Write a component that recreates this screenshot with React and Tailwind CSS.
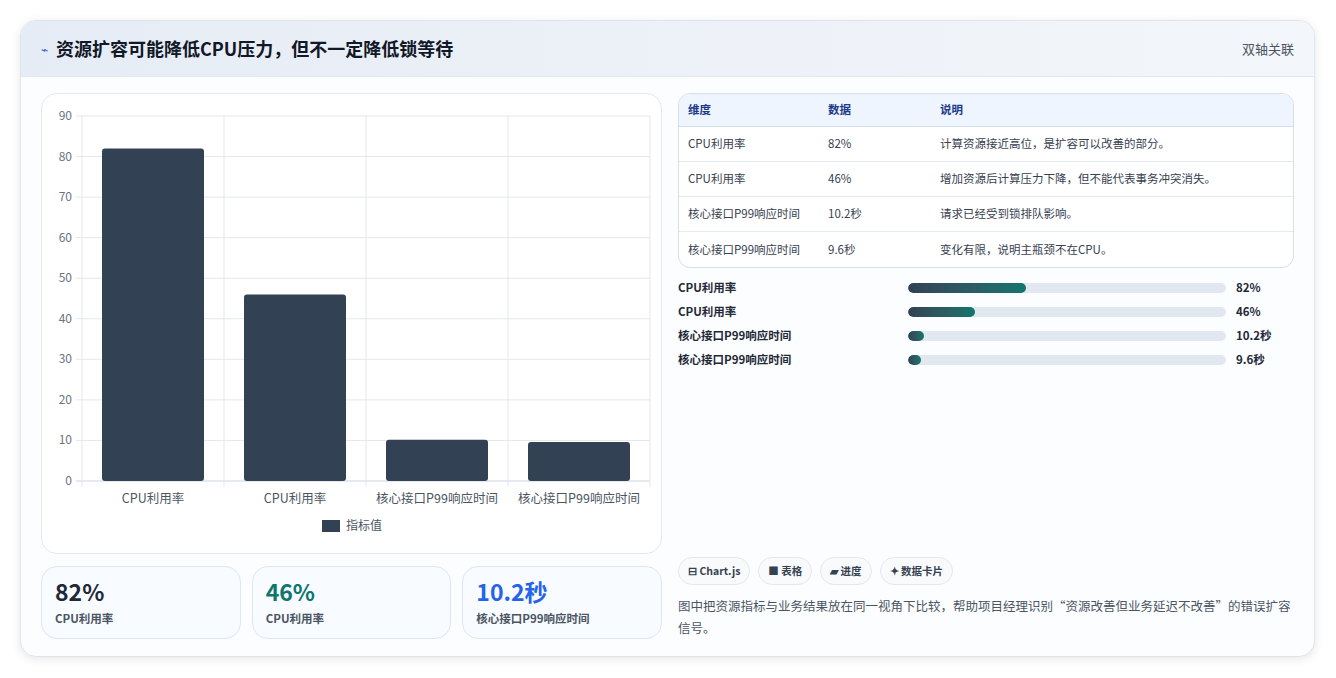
export default function App() {
  const bars = [
    { l: "CPU利用率", v: 82 },
    { l: "CPU利用率", v: 46 },
    { l: "核心接口P99响应时间", v: 10.2 },
    { l: "核心接口P99响应时间", v: 9.6 },
  ];
  const rows = [
    ["CPU利用率", "82%", "计算资源接近高位，是扩容可以改善的部分。"],
    ["CPU利用率", "46%", "增加资源后计算压力下降，但不能代表事务冲突消失。"],
    ["核心接口P99响应时间", "10.2秒", "请求已经受到锁排队影响。"],
    ["核心接口P99响应时间", "9.6秒", "变化有限，说明主瓶颈不在CPU。"],
  ];
  const prog = [
    ["CPU利用率", 37, "82%"],
    ["CPU利用率", 21, "46%"],
    ["核心接口P99响应时间", 5, "10.2秒"],
    ["核心接口P99响应时间", 4, "9.6秒"],
  ];
  const x0 = 80, x1 = 648, yTop = 115, yBot = 480;
  const sy = (v) => yBot - (v / 90) * (yBot - yTop);
  const cw = (x1 - x0) / 4;
  return (
    <div className="w-[1336px] h-[678px] bg-white p-5 pb-5" style={{ fontFamily: '"Noto Sans CJK SC", "Noto Sans", sans-serif' }}>
      <div className="w-[1295px] h-[637px] rounded-2xl border border-[#dfe5ee] bg-[#fcfdff] shadow-[0_2px_10px_rgba(15,23,42,0.1)] overflow-hidden flex flex-col">
        <div className="h-[56px] flex items-center justify-between px-5 bg-gradient-to-r from-[#e6ecf5] to-[#f3f6fa] border-b border-[#e3e8f0]">
          <div className="flex items-center gap-2">
            <span className="text-[#3b5bdb] text-[12px]">⌁</span>
            <span className="text-[18px] font-bold text-[#111827]">资源扩容可能降低CPU压力，但不一定降低锁等待</span>
          </div>
          <span className="text-[13px] text-[#4b5563]">双轴关联</span>
        </div>
        <div className="flex gap-4 px-5 pt-4">
          <div className="w-[621px] flex flex-col gap-3">
            <div className="h-[461px] rounded-2xl border border-[#e3e8f0] bg-white relative">
              <svg width="621" height="461" viewBox="40 93 621 461" className="absolute inset-0">
                {[0,10,20,30,40,50,60,70,80,90].map((t) => (
                  <g key={t}>
                    <line x1={x0 - 6} x2={x1} y1={sy(t)} y2={sy(t)} stroke={t === 0 ? "#cbd5e1" : "#e5e7eb"} />
                    <text x={70} y={sy(t) + 4} textAnchor="end" fontSize="12" fill="#6b7280">{t}</text>
                  </g>
                ))}
                {[0,1,2,3,4].map((i) => (
                  <line key={i} x1={x0 + i * cw} x2={x0 + i * cw} y1={yTop} y2={yBot + 6} stroke="#e5e7eb" />
                ))}
                {bars.map((b, i) => (
                  <g key={i}>
                    <rect x={x0 + i * cw + 20} y={sy(b.v)} width={102} height={yBot - sy(b.v)} rx="3" fill="#334155" />
                    <text x={x0 + i * cw + cw / 2} y={502} textAnchor="middle" fontSize="12.5" fill="#4b5563">{b.l}</text>
                  </g>
                ))}
                <rect x="320" y="519" width="18" height="12" fill="#334155" />
                <text x="344" y="529" fontSize="12" fill="#4b5563">指标值</text>
              </svg>
            </div>
            <div className="flex gap-[11px]">
              {[["82%", "text-[#1f2937]", "CPU利用率"], ["46%", "text-[#0f766e]", "CPU利用率"], ["10.2秒", "text-[#2563eb]", "核心接口P99响应时间"]].map(([v, c, l], i) => (
                <div key={i} className="w-[200px] h-[73px] rounded-2xl border border-[#dde6f3] bg-[#f8fbff] px-[13px] pt-[9px]">
                  <div className={`text-[23px] font-bold leading-[30px] ${c}`}>{v}</div>
                  <div className="text-[11.5px] font-semibold text-[#4b5563] mt-[4px]">{l}</div>
                </div>
              ))}
            </div>
          </div>
          <div className="flex-1 flex flex-col">
            <div className="rounded-xl border border-[#d6deea] bg-white overflow-hidden">
              <div className="h-[33px] flex items-center bg-[#eef5ff] border-b border-[#d6deea] text-[11.5px] font-semibold text-[#1e3a8a]">
                <span className="w-[149px] pl-[9px]">维度</span><span className="w-[112px]">数据</span><span>说明</span>
              </div>
              {rows.map((r, i) => (
                <div key={i} className={`h-[35px] flex items-center text-[11.5px] text-[#374151] ${i < 3 ? "border-b border-[#e5e9f0]" : ""}`}>
                  <span className="w-[149px] pl-[9px]">{r[0]}</span><span className="w-[112px]">{r[1]}</span><span>{r[2]}</span>
                </div>
              ))}
            </div>
            <div className="flex flex-col gap-[9px] mt-[12px]">
              {prog.map(([l, p, v], i) => (
                <div key={i} className="h-[15px] flex items-center text-[11.5px] font-semibold text-[#1f2937]">
                  <span className="w-[230px]">{l}</span>
                  <div className="w-[318px] h-[10px] rounded-full bg-[#e2e8f0] overflow-hidden">
                    <div className="h-full rounded-full bg-gradient-to-r from-[#334155] to-[#0f766e]" style={{ width: `${p}%` }} />
                  </div>
                  <span className="ml-[10px]">{v}</span>
                </div>
              ))}
            </div>
            <div className="mt-auto flex gap-2 pt-[190px]">
              {["⊟ Chart.js", "■ 表格", "▰ 进度", "✦ 数据卡片"].map((c) => (
                <span key={c} className="h-[28px] px-[9px] flex items-center rounded-full border border-[#e3e8f0] bg-[#f8fafc] text-[10.5px] font-semibold text-[#374151]">{c}</span>
              ))}
            </div>
            <p className="mt-[10px] text-[12.5px] leading-[22px] text-[#4b5563]">图中把资源指标与业务结果放在同一视角下比较，帮助项目经理识别“资源改善但业务延迟不改善”的错误扩容信号。</p>
          </div>
        </div>
      </div>
    </div>
  );
}
